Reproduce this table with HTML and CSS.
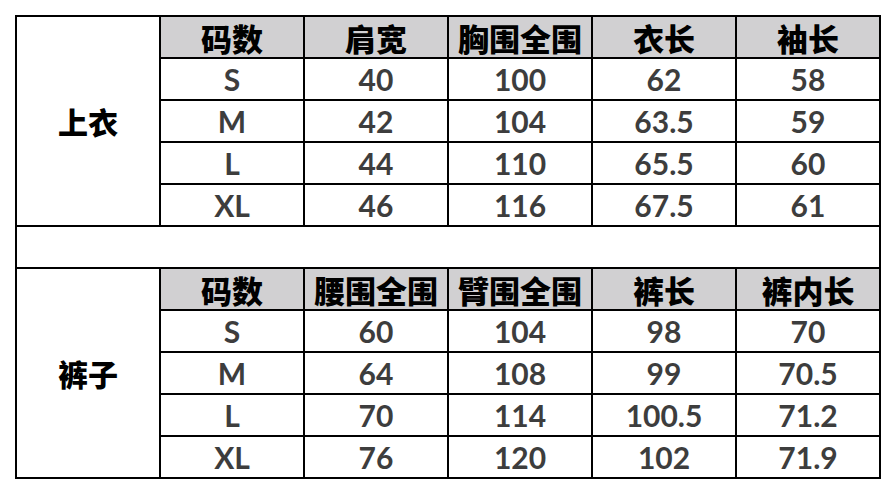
FILE: index.html
```html
<!DOCTYPE html>
<html lang="zh">
<head>
<meta charset="utf-8">
<link rel="stylesheet" href="styles.css">
</head>
<body>
<table class="size-table">
  <tbody>
    <tr class="head">
      <td class="group" rowspan="5">上衣</td>
      <th>码数</th><th>肩宽</th><th>胸围全围</th><th>衣长</th><th>袖长</th>
    </tr>
    <tr><td>S</td><td>40</td><td>100</td><td>62</td><td>58</td></tr>
    <tr><td>M</td><td>42</td><td>104</td><td>63.5</td><td>59</td></tr>
    <tr><td>L</td><td>44</td><td>110</td><td>65.5</td><td>60</td></tr>
    <tr><td>XL</td><td>46</td><td>116</td><td>67.5</td><td>61</td></tr>
    <tr class="spacer"><td colspan="6"></td></tr>
    <tr class="head">
      <td class="group" rowspan="5">裤子</td>
      <th>码数</th><th>腰围全围</th><th>臂围全围</th><th>裤长</th><th>裤内长</th>
    </tr>
    <tr><td>S</td><td>60</td><td>104</td><td>98</td><td>70</td></tr>
    <tr><td>M</td><td>64</td><td>108</td><td>99</td><td>70.5</td></tr>
    <tr><td>L</td><td>70</td><td>114</td><td>100.5</td><td>71.2</td></tr>
    <tr><td>XL</td><td>76</td><td>120</td><td>102</td><td>71.9</td></tr>
  </tbody>
</table>
</body>
</html>
```
FILE: styles.css
```css
html, body {
  margin: 0;
  padding: 0;
  background: #ffffff;
}
body {
  padding: 15px 0 0 15px;
}
.size-table {
  border-collapse: collapse;
  table-layout: fixed;
}
.size-table td, .size-table th {
  border: 2px solid #000;
  width: 142px;
  height: 40px;
  padding: 0;
  text-align: center;
  vertical-align: middle;
  font-family: "Lato", "Noto Sans CJK SC", sans-serif;
  font-weight: 700;
  font-size: 30px;
  line-height: 40px;
  color: #3d3d3d;
}
.size-table th {
  background: #d1d0d2;
  color: #000;
  font-family: "Noto Sans CJK SC", sans-serif;
  font-weight: 900;
  font-size: 31px;
  height: 38px;
  padding-top: 2px;
  line-height: 38px;
}
.size-table td.group {
  color: #000;
  font-family: "Noto Sans CJK SC", sans-serif;
  font-weight: 900;
  font-size: 30px;
}
.size-table .spacer td {
  background: #fff;
}
```
